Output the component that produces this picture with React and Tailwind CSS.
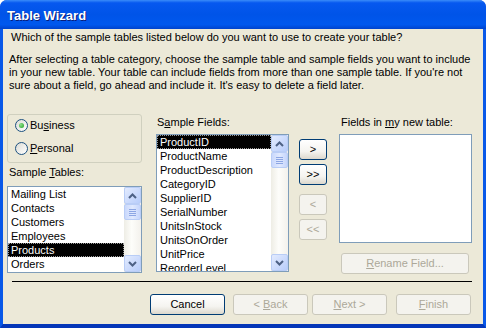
const TABLES = ['Mailing List', 'Contacts', 'Customers', 'Employees', 'Products', 'Orders']
const FIELDS = ['ProductID', 'ProductName', 'ProductDescription', 'CategoryID', 'SupplierID', 'SerialNumber', 'UnitsInStock', 'UnitsOnOrder', 'UnitPrice', 'ReorderLevel']

function Chevron({ up }) {
  return (
    <svg width="9" height="6" viewBox="0 0 9 6">
      <path d={up ? 'M1 5L4.5 1.5L8 5' : 'M1 1L4.5 4.5L8 1'} stroke="#4d6185" strokeWidth="2" fill="none" />
    </svg>
  )
}

function ScrollBtn({ up }) {
  return (
    <div className="h-[17px] w-[17px] shrink-0 rounded-[2px] border border-[#b9cdf6] bg-[linear-gradient(135deg,#e3ebfe,#b8cdfb)] flex items-center justify-center">
      <Chevron up={up} />
    </div>
  )
}

function Scrollbar() {
  return (
    <div className="w-[17px] h-full flex flex-col bg-[linear-gradient(to_right,#eeede5,#fdfdfa_45%,#f3f1ec)]">
      <ScrollBtn up />
      <div className="flex-1">
        <div className="h-[16px] w-[17px] rounded-[2px] border border-[#b9cdf6] bg-[linear-gradient(to_right,#c9d8fc,#e0e9fe_50%,#c5d5fc)] flex flex-col items-center justify-center gap-[1px]">
          <div className="h-px w-[7px] bg-[#8ca6e4]" />
          <div className="h-px w-[7px] bg-[#8ca6e4]" />
          <div className="h-px w-[7px] bg-[#8ca6e4]" />
          <div className="h-px w-[7px] bg-[#8ca6e4]" />
        </div>
      </div>
      <ScrollBtn />
    </div>
  )
}

function ListBox({ items, selected, className }) {
  return (
    <div className={`border border-[#7f9db9] bg-white flex ${className}`}>
      <div className="flex-1 overflow-hidden">
        {items.map((it) => (
          <div
            key={it}
            className={`h-[14px] leading-[12px] pl-[2px] border border-dotted ${it === selected ? 'bg-black text-white border-[#9a9a9a]' : 'border-transparent'}`}
          >
            {it}
          </div>
        ))}
      </div>
      {items.length > 0 && <Scrollbar />}
    </div>
  )
}

function XpButton({ children, disabled, className }) {
  return (
    <div
      className={`h-[21px] rounded-[3px] border flex items-center justify-center ${disabled ? 'border-[#cac8bb] bg-[#f4f3ee] text-[#aca899]' : 'border-[#003c74] bg-[linear-gradient(#ffffff,#f5f4f0_60%,#dcd8cd)] text-black'} ${className}`}
    >
      {children}
    </div>
  )
}

function Radio({ checked, children }) {
  return (
    <div className="flex items-center h-[14px]">
      <div className="h-[13px] w-[13px] rounded-full border border-[#1c5180] bg-[linear-gradient(135deg,#dcdcd5,#ffffff)] flex items-center justify-center">
        {checked && <div className="h-[5px] w-[5px] rounded-full bg-[radial-gradient(circle_at_35%_35%,#8fe08f,#21a121)]" />}
      </div>
      <span className="ml-[2px]">{children}</span>
    </div>
  )
}

export default function App() {
  return (
    <div className="w-[486px] h-[328px] flex flex-col font-['Liberation_Sans',Arial,sans-serif] text-[11px] leading-[13px] text-black bg-[#0a4bd8] rounded-t-[7px] overflow-hidden">
      <div className="h-[29px] shrink-0 flex items-center pl-[7px] bg-[linear-gradient(to_bottom,#3a8cf9_0%,#0658ef_10%,#0054e8_50%,#0058ee_85%,#0043cc_100%)]">
        <span className="text-white text-[13px] font-bold [text-shadow:1px_1px_0_#0a1e7a] mt-[1px]">Table Wizard</span>
      </div>
      <div className="flex-1 flex border-x-[3px] border-b-[4px] border-x-[#0858e8] border-b-[#0436b8]">
        <div className="flex-1 bg-[#ece9d8] flex flex-col">
          <p className="ml-[8px] mt-[2px]">Which of the sample tables listed below do you want to use to create your table?</p>
          <p className="ml-[6px] mt-[9px]">
            After selecting a table category, choose the sample table and sample fields you want to include<br />
            in your new table. Your table can include fields from more than one sample table. If you're not<br />
            sure about a field, go ahead and include it. It's easy to delete a field later.
          </p>

          <div className="mt-[22px] ml-[4px] h-[160px] flex items-start">
            <div className="w-[135px] flex flex-col">
              <div className="h-[49px] rounded-[3px] border border-[#d0d0bf] pl-[7px] pt-[3px] flex flex-col gap-[9px]">
                <Radio checked>Bu<u>s</u>iness</Radio>
                <Radio><u>P</u>ersonal</Radio>
              </div>
              <div className="mt-[3px] ml-[2px]">Sample <u>T</u>ables:</div>
              <ListBox items={TABLES} selected="Products" className="mt-[7px] h-[87px]" />
            </div>

            <div className="ml-[14px] w-[133px] flex flex-col pt-[2px]">
              <div className="ml-[1px]">S<u>a</u>mple Fields:</div>
              <ListBox items={FIELDS} selected="ProductID" className="mt-[5px] h-[138px]" />
            </div>

            <div className="ml-[10px] w-[28px] pt-[25px] flex flex-col">
              <XpButton>&gt;</XpButton>
              <XpButton className="mt-[4px]">&gt;&gt;</XpButton>
              <XpButton disabled className="mt-[9px]">&lt;</XpButton>
              <XpButton disabled className="mt-[4px]">&lt;&lt;</XpButton>
            </div>

            <div className="ml-[12px] w-[133px] flex flex-col pt-[2px]">
              <div className="ml-[2px]">Fields in <u>m</u>y new table:</div>
              <ListBox items={[]} className="mt-[5px] h-[109px]" />
              <XpButton disabled className="mt-[10px] ml-[2px] w-[128px]"><span><u>R</u>ename Field...</span></XpButton>
            </div>
          </div>

          <div className="mt-[7px] ml-[9px] w-[460px] h-px bg-black" />

          <div className="mt-[12px] ml-[147px] flex">
            <XpButton className="w-[75px]">Cancel</XpButton>
            <XpButton disabled className="ml-[8px] w-[75px]"><span>&lt; <u>B</u>ack</span></XpButton>
            <XpButton disabled className="ml-[4px] w-[75px]"><span><u>N</u>ext &gt;</span></XpButton>
            <XpButton disabled className="ml-[9px] w-[75px]"><span><u>F</u>inish</span></XpButton>
          </div>
        </div>
      </div>
    </div>
  )
}
